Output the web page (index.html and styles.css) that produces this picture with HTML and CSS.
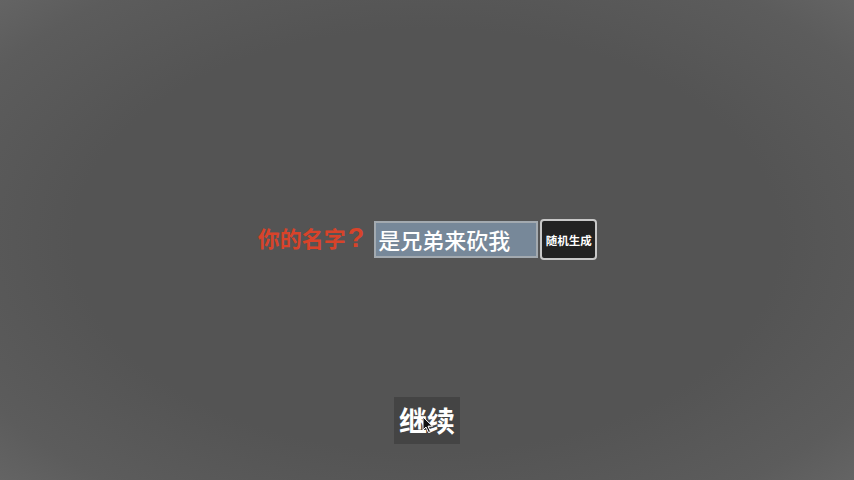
FILE: index.html
```html
<!DOCTYPE html>
<html lang="zh-CN">
<head>
<meta charset="utf-8">
<title>你的名字</title>
<link rel="stylesheet" href="styles.css">
</head>
<body>
  <main class="screen">
    <div class="name-row">
      <label class="name-label" for="name">你的名字<span class="qmark">?</span></label>
      <input class="name-input" id="name" type="text" value="是兄弟来砍我">
      <button class="random-btn" type="button">随机生成</button>
    </div>
    <div class="continue-wrap">
      <button class="continue-btn" type="button">继续</button>
      <svg class="pointer" width="12" height="18" viewBox="0 0 12 18" aria-hidden="true">
        <path d="M1 1 L1 14 L4 11 L6.5 16.5 L8.5 15.6 L6 10.2 L10.5 10.2 Z" fill="#111" stroke="#fff" stroke-width="1"/>
      </svg>
    </div>
  </main>
</body>
</html>
```
FILE: styles.css
```css
html, body {
  margin: 0;
  height: 100%;
}

body {
  background: radial-gradient(ellipse 75% 80% at 50% 50%, #545454 55%, #5c5c5c 80%, #6a6a6a 100%);
  background-color: #555;
  font-family: "Noto Sans CJK SC", "Noto Sans", sans-serif;
  overflow: hidden;
}

.screen {
  height: 480px;
  display: flex;
  flex-direction: column;
  align-items: center;
  padding-top: 219px;
  box-sizing: border-box;
}

.name-row {
  display: flex;
  align-items: center;
  height: 41px;
  margin-left: 1px;
}

.name-label {
  display: flex;
  align-items: baseline;
  color: #d8432a;
  font-size: 22px;
  font-weight: 700;
  line-height: 1;
  margin-right: 10px;
  margin-top: -2px;
}

/* wide question mark after the label */
.qmark {
  font-family: "Liberation Sans", Arial, sans-serif;
  font-size: 27px;
  font-weight: 700;
  margin-left: 2px;
}

.name-input {
  box-sizing: border-box;
  width: 164px;
  height: 37px;
  margin: 0 2px 0 0;
  padding: 0 0 2px 2px;
  background: #778899;
  border: 2px solid #a3aab0;
  border-radius: 0;
  color: #fff;
  font-family: inherit;
  font-size: 22px;
  font-weight: 500;
  outline: none;
}

.random-btn {
  box-sizing: border-box;
  width: 57px;
  height: 41px;
  padding: 0;
  background: #222;
  border: 2px solid #c8c8c8;
  border-radius: 4px;
  color: #fff;
  font-family: inherit;
  font-size: 11.5px;
  font-weight: 700;
}

.continue-wrap {
  position: relative;
  margin-top: 137px;
}

.continue-btn {
  box-sizing: border-box;
  width: 66px;
  height: 47px;
  padding: 0 0 2px;
  background: #444;
  border: none;
  border-radius: 0;
  color: #fff;
  font-family: inherit;
  font-size: 28px;
  font-weight: 600;
  line-height: 1;
}

.pointer {
  position: absolute;
  left: 28px;
  top: 19px;
}
```
